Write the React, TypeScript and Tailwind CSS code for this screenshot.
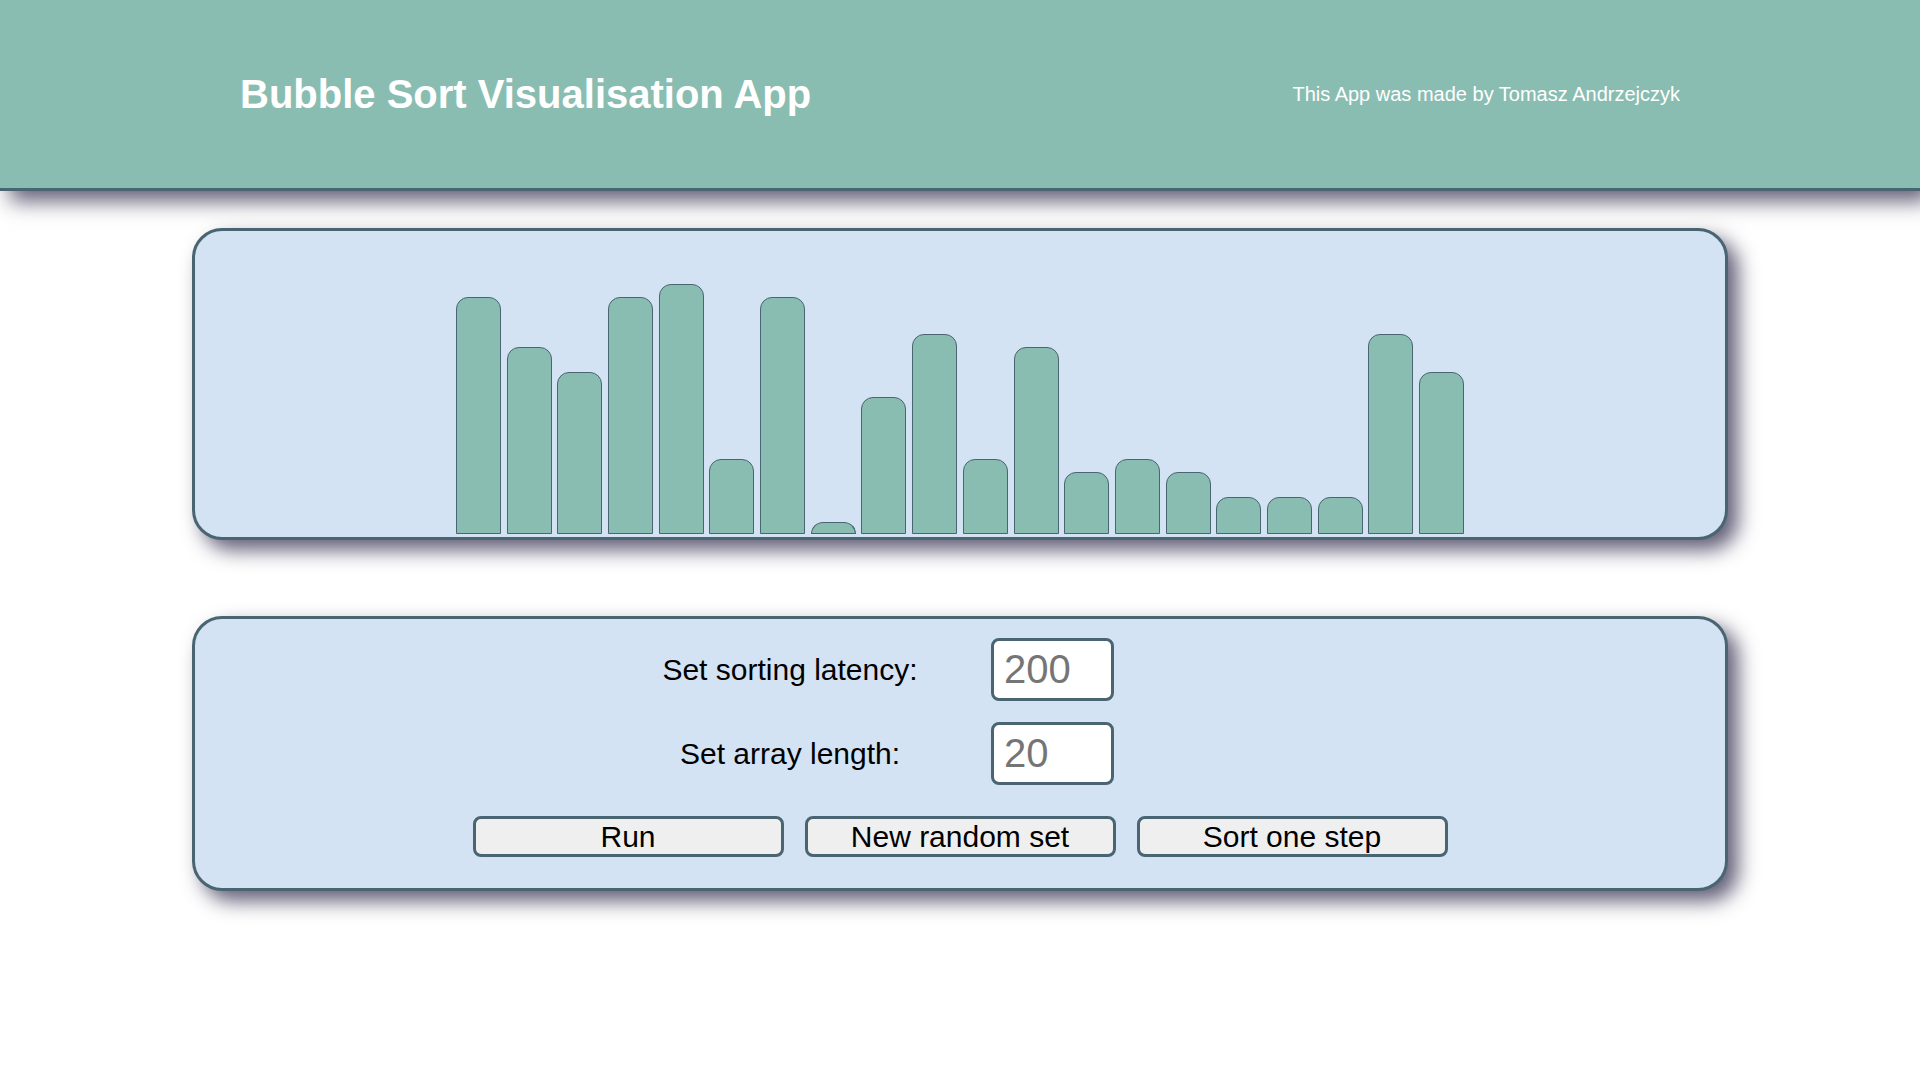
import { useState } from 'react';

const BAR_VALUES = [19, 15, 13, 19, 20, 6, 19, 1, 11, 16, 6, 15, 5, 6, 5, 3, 3, 3, 16, 13];

const panelClass =
  'w-[80%] mx-auto bg-[#d3e3f4] border-[3px] border-[#4a6572] rounded-[30px] shadow-[10px_10px_20px_rgba(30,25,60,0.7)]';

const inputClass =
  'w-[123px] h-[63px] bg-white border-[3px] border-[#4a6572] rounded-[8px] px-[10px] text-[40px] text-[#757575] placeholder:text-[#757575] outline-none';

export default function App() {
  const [latency, setLatency] = useState('');
  const [length, setLength] = useState('');

  return (
    <div className="min-h-screen bg-white font-['Liberation_Sans',Arial,sans-serif] text-black">
      <header className="h-[191px] bg-[#8abdb1] border-b-[3px] border-[#4a6572] flex items-center justify-between px-[240px] shadow-[10px_10px_20px_rgba(30,25,60,0.7)] relative z-10">
        <h1 className="text-[40px] font-bold text-white leading-none">Bubble Sort Visualisation App</h1>
        <p className="text-[20px] text-white leading-none">This App was made by Tomasz Andrzejczyk</p>
      </header>

      <main className="pt-[37px] pb-10">
        <section className={`${panelClass} h-[312px] flex items-end justify-center gap-[5.7px] pb-[3px]`}>
          {BAR_VALUES.map((v, i) => (
            <div
              key={i}
              className="w-[45px] bg-[#8abdb1] border border-[#4a6572] rounded-t-[12px]"
              style={{ height: `${v * 12.5}px` }}
            />
          ))}
        </section>

        <section className={`${panelClass} mt-[76px] h-[275px] pt-[19px]`}>
          <div className="w-[640px] mx-auto grid grid-cols-[300px_289px] gap-x-[51px] gap-y-[21px] items-center">
            <label className="text-[30px] text-center leading-none">Set sorting latency:</label>
            <input
              className={inputClass}
              placeholder="200"
              value={latency}
              onChange={(e) => setLatency(e.target.value)}
            />
            <label className="text-[30px] text-center leading-none">Set array length:</label>
            <input
              className={inputClass}
              placeholder="20"
              value={length}
              onChange={(e) => setLength(e.target.value)}
            />
          </div>

          <div className="mt-[31px] flex justify-center gap-[21px]">
            {['Run', 'New random set', 'Sort one step'].map((label) => (
              <button
                key={label}
                className="w-[311px] h-[41px] bg-[#efefef] border-[3px] border-[#4a6572] rounded-[8px] text-[30px] leading-none flex items-center justify-center"
              >
                {label}
              </button>
            ))}
          </div>
        </section>
      </main>
    </div>
  );
}
